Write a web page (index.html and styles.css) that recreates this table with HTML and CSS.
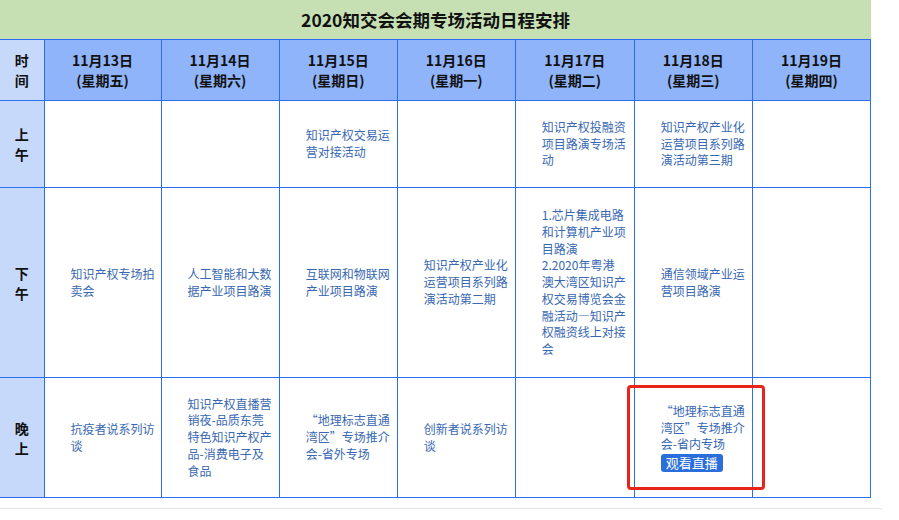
FILE: index.html
```html
<!DOCTYPE html>
<html lang="zh-CN">
<head>
<meta charset="utf-8">
<title>2020知交会会期专场活动日程安排</title>
<link rel="stylesheet" href="styles.css">
</head>
<body>
<div class="page">
  <div class="title">2020知交会会期专场活动日程安排</div>
  <table class="schedule">
    <colgroup>
      <col class="c-time"><col class="c-narrow"><col class="c-day"><col class="c-day"><col class="c-day"><col class="c-wide"><col class="c-day"><col class="c-day">
    </colgroup>
    <tr class="r-head">
      <th class="label">时<br>间</th>
      <th>11月13日<br>(星期五)</th>
      <th>11月14日<br>(星期六)</th>
      <th>11月15日<br>(星期日)</th>
      <th>11月16日<br>(星期一)</th>
      <th>11月17日<br>(星期二)</th>
      <th>11月18日<br>(星期三)</th>
      <th>11月19日<br>(星期四)</th>
    </tr>
    <tr class="r-am">
      <th class="label">上<br>午</th>
      <td></td>
      <td></td>
      <td>知识产权交易运<br>营对接活动</td>
      <td></td>
      <td>知识产权投融资<br>项目路演专场活<br>动</td>
      <td>知识产权产业化<br>运营项目系列路<br>演活动第三期</td>
      <td></td>
    </tr>
    <tr class="r-pm">
      <th class="label">下<br>午</th>
      <td>知识产权专场拍<br>卖会</td>
      <td>人工智能和大数<br>据产业项目路演</td>
      <td>互联网和物联网<br>产业项目路演</td>
      <td>知识产权产业化<br>运营项目系列路<br>演活动第二期</td>
      <td>1.芯片集成电路<br>和计算机产业项<br>目路演<br>2.2020年粤港<br>澳大湾区知识产<br>权交易博览会金<br>融活动—知识产<br>权融资线上对接<br>会</td>
      <td>通信领域产业运<br>营项目路演</td>
      <td></td>
    </tr>
    <tr class="r-eve">
      <th class="label">晚<br>上</th>
      <td>抗疫者说系列访<br>谈</td>
      <td>知识产权直播营<br>销夜-品质东莞<br>特色知识产权产<br>品-消费电子及<br>食品</td>
      <td>“地理标志直通<br>湾区”专场推介<br>会-省外专场</td>
      <td>创新者说系列访<br>谈</td>
      <td></td>
      <td class="live">“地理标志直通<br>湾区”专场推介<br>会-省内专场<br><span class="btn">观看直播</span></td>
      <td></td>
    </tr>
  </table>
  <div class="rule"></div>
  <div class="highlight"></div>
</div>
</body>
</html>
```

FILE: styles.css
```css
html, body {
  margin: 0;
  padding: 0;
  background: #ffffff;
}

body {
  font-family: "Noto Sans CJK SC", "Noto Sans", sans-serif;
}

.page {
  position: relative;
  width: 899px;
}

.title {
  width: 871px;
  height: 39px;
  line-height: 39px;
  background: #c6e0b4;
  color: #111;
  font-size: 17.5px;
  font-weight: bold;
  text-align: center;
}

.schedule {
  width: 871px;
  border-collapse: collapse;
  table-layout: fixed;
}

.c-time { width: 44px; }
.c-narrow { width: 117px; }
.c-day { width: 118px; }
.c-wide { width: 119px; }

.schedule th,
.schedule td {
  border: 1px solid #2c6ef0;
  padding: 0;
}

.schedule tr > :first-child {
  border-left: none;
}

.schedule th {
  font-size: 14px;
  font-weight: bold;
  line-height: 20px;
  color: #111;
  text-align: center;
  vertical-align: middle;
  background: #8fb4fa;
}

.schedule th.label {
  background: #c6d9fb;
}

.schedule td {
  font-size: 12px;
  line-height: 16.7px;
  color: #3868b2;
  text-align: left;
  vertical-align: middle;
  padding: 0 2px 0 26px;
  background: #fff;
}

.r-head { height: 61px; }
.r-am { height: 87px; }
.r-pm { height: 190px; }
.r-eve { height: 120px; }

.btn {
  display: inline-block;
  margin-top: 1px;
  height: 18px;
  line-height: 18px;
  padding: 0 5px;
  font-size: 13px;
  color: #fff;
  background: #2a6edb;
  border-radius: 3px;
}

.rule {
  width: 882px;
  height: 1px;
  margin-top: 10px;
  background: #e6e6e6;
}

.highlight {
  position: absolute;
  left: 627px;
  top: 385px;
  width: 132px;
  height: 99px;
  border: 3px solid #e8231c;
  border-radius: 4px;
}
```
